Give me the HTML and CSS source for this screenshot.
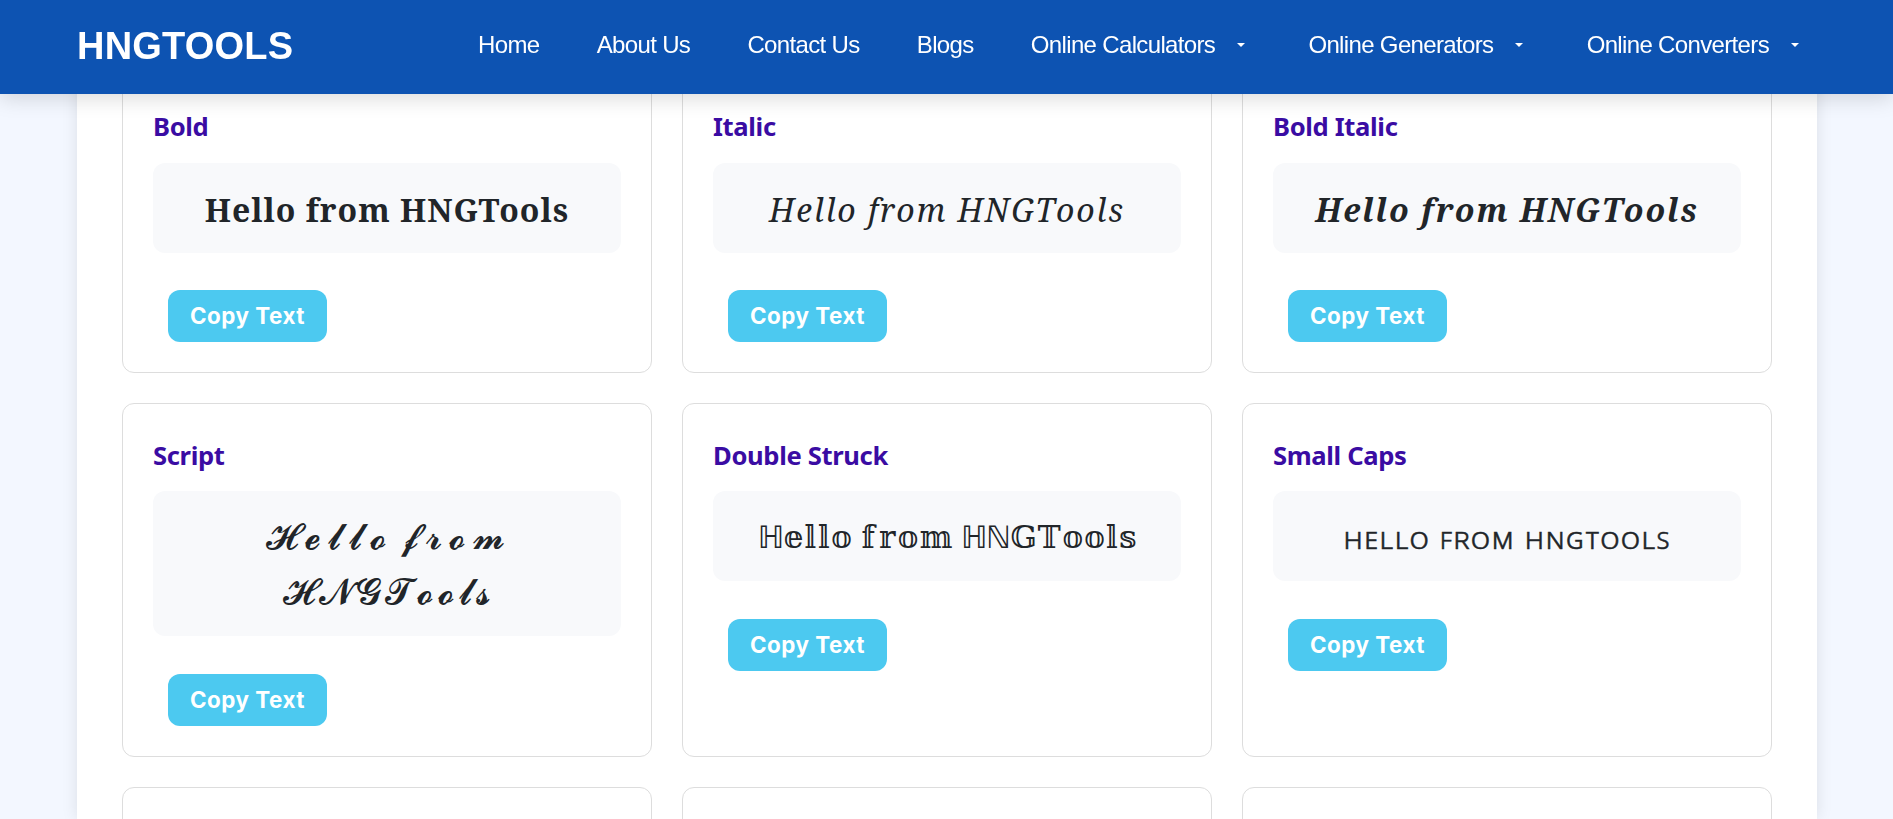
FILE: index.html
```html
<!DOCTYPE html>
<html lang="en">

<head>
    <meta charset="UTF-8">
    <meta name="viewport" content="width=device-width, initial-scale=1.0">
    <title>HNGTOOLS - Fancy Text Generator</title>
    <link rel="stylesheet" href="styles.css">
</head>

<body>
    <header class="navbar">
        <a class="logo" href="#">HNGTOOLS</a>
        <nav class="nav-links">
            <a href="#">Home</a>
            <a href="#">About Us</a>
            <a href="#">Contact Us</a>
            <a href="#">Blogs</a>
            <a href="#" class="dropdown">Online Calculators</a>
            <a href="#" class="dropdown">Online Generators</a>
            <a href="#" class="dropdown">Online Converters</a>
        </nav>
    </header>

    <main class="container">
        <div class="style-grid">
            <div class="style-card">
                <h3>Bold</h3>
                <div class="preview bold">Hello from HNGTools</div>
                <button class="copy-btn">Copy Text</button>
            </div>
            <div class="style-card">
                <h3>Italic</h3>
                <div class="preview italic">Hello from HNGTools</div>
                <button class="copy-btn">Copy Text</button>
            </div>
            <div class="style-card">
                <h3>Bold Italic</h3>
                <div class="preview bold-italic">Hello from HNGTools</div>
                <button class="copy-btn">Copy Text</button>
            </div>
            <div class="style-card">
                <h3>Script</h3>
                <div class="preview script"><span class="wide">𝓗𝓮𝓵𝓵𝓸 𝓯𝓻𝓸𝓶</span> 𝓗𝓝𝓖𝓣𝓸𝓸𝓵𝓼</div>
                <button class="copy-btn">Copy Text</button>
            </div>
            <div class="style-card">
                <h3>Double Struck</h3>
                <div class="preview double"><span class="thin">ℍ</span>𝕖𝕝𝕝𝕠 𝕗𝕣𝕠𝕞 <span class="thin">ℍℕ</span>𝔾𝕋𝕠𝕠𝕝𝕤</div>
                <button class="copy-btn">Copy Text</button>
            </div>
            <div class="style-card">
                <h3>Small Caps</h3>
                <div class="preview small-caps">ʜᴇʟʟᴏ ꜰʀᴏᴍ ʜɴɢᴛᴏᴏʟꜱ</div>
                <button class="copy-btn">Copy Text</button>
            </div>
            <div class="style-card"></div>
            <div class="style-card"></div>
            <div class="style-card"></div>
        </div>
    </main>
</body>

</html>
```
FILE: styles.css
```css
* {
    box-sizing: border-box;
}

body {
    margin: 0;
    background: #f3f7ff;
    color: #212529;
    font-family: "Noto Sans", sans-serif;
}

.navbar {
    position: fixed;
    top: 0;
    left: 0;
    right: 0;
    z-index: 10;
    height: 94px;
    padding: 0 88px 4px 77px;
    display: flex;
    align-items: center;
    justify-content: space-between;
    background: #0d53b2;
    box-shadow: 0 4px 20px rgba(0, 0, 0, 0.15);
    font-family: "Liberation Sans", Arial, sans-serif;
}

.navbar a {
    color: #fff;
    text-decoration: none;
    white-space: nowrap;
}

.logo {
    padding-top: 2px;
    font-size: 38px;
    font-weight: bold;
    letter-spacing: 0.2px;
}

.nav-links {
    display: flex;
    gap: 57.2px;
    font-size: 24px;
    letter-spacing: -0.65px;
}

.dropdown {
    display: flex;
    align-items: center;
    padding-right: 6px;
}

.dropdown::after {
    content: "";
    margin-left: 22px;
    border-top: 4px solid #fff;
    border-left: 4px solid transparent;
    border-right: 4px solid transparent;
}

.container {
    width: 1740px;
    height: 819px;
    overflow: hidden;
    margin: 0 76px 0 77px;
    padding: 74.6px 45px 0;
    background: #fff;
    box-shadow: 0 0 15px rgba(0, 0, 0, 0.1);
}

.style-grid {
    display: grid;
    grid-template-columns: repeat(3, 1fr);
    grid-template-rows: 298.4px 354px 298px;
    gap: 30px;
}

.style-card {
    padding: 30px;
    border: 1px solid #ddd;
    border-radius: 12px;
}

h3 {
    margin: 0;
    height: 57px;
    padding-top: 2.8px;
    color: #3a0ca3;
    font-size: 25.6px;
    font-weight: 700;
    line-height: 38px;
    letter-spacing: -0.35px;
}

.preview {
    margin-bottom: 37.4px;
    padding: 19.5px 18px 16.5px;
    border-radius: 12px;
    background: #f8f9fb;
    font-size: 32px;
    line-height: 54.4px;
    letter-spacing: 1px;
    text-align: center;
}

.bold,
.italic,
.bold-italic {
    padding: 20.5px 18px 15.5px;
    font-family: "Noto Serif", "DejaVu Serif", "Liberation Serif", serif;
}

.bold,
.bold-italic {
    font-weight: bold;
}

.italic,
.bold-italic {
    font-style: italic;
    letter-spacing: 1.95px;
}

.script {
    margin-bottom: 38px;
    padding-left: 82px;
    padding-right: 78px;
    font-family: "DejaVu Serif", "DejaVu Sans", serif;
    font-size: 36px;
    letter-spacing: 3.8px;
}

.wide {
    letter-spacing: 7px;
    word-spacing: -11px;
}

.double {
    height: 90.4px;
    padding-top: 21.5px;
    font-family: "DejaVu Math TeX Gyre", "DejaVu Sans", serif;
    font-size: 31px;
    letter-spacing: -1.5px;
    white-space: nowrap;
}

.thin {
    font-family: "DejaVu Sans", sans-serif;
    line-height: 1;
}

.small-caps {
    font-size: 32px;
    font-weight: 300;
    letter-spacing: 1.2px;
    -webkit-text-stroke: 0.5px #212529;
}

.copy-btn {
    display: block;
    width: 159px;
    height: 52px;
    margin-left: 15px;
    padding: 0 0 1px;
    border: none;
    border-radius: 12px;
    background: #4cc9f0;
    color: #fff;
    font-family: Inter, sans-serif;
    font-size: 22.4px;
    font-weight: 700;
    letter-spacing: 0.5px;
}
```
